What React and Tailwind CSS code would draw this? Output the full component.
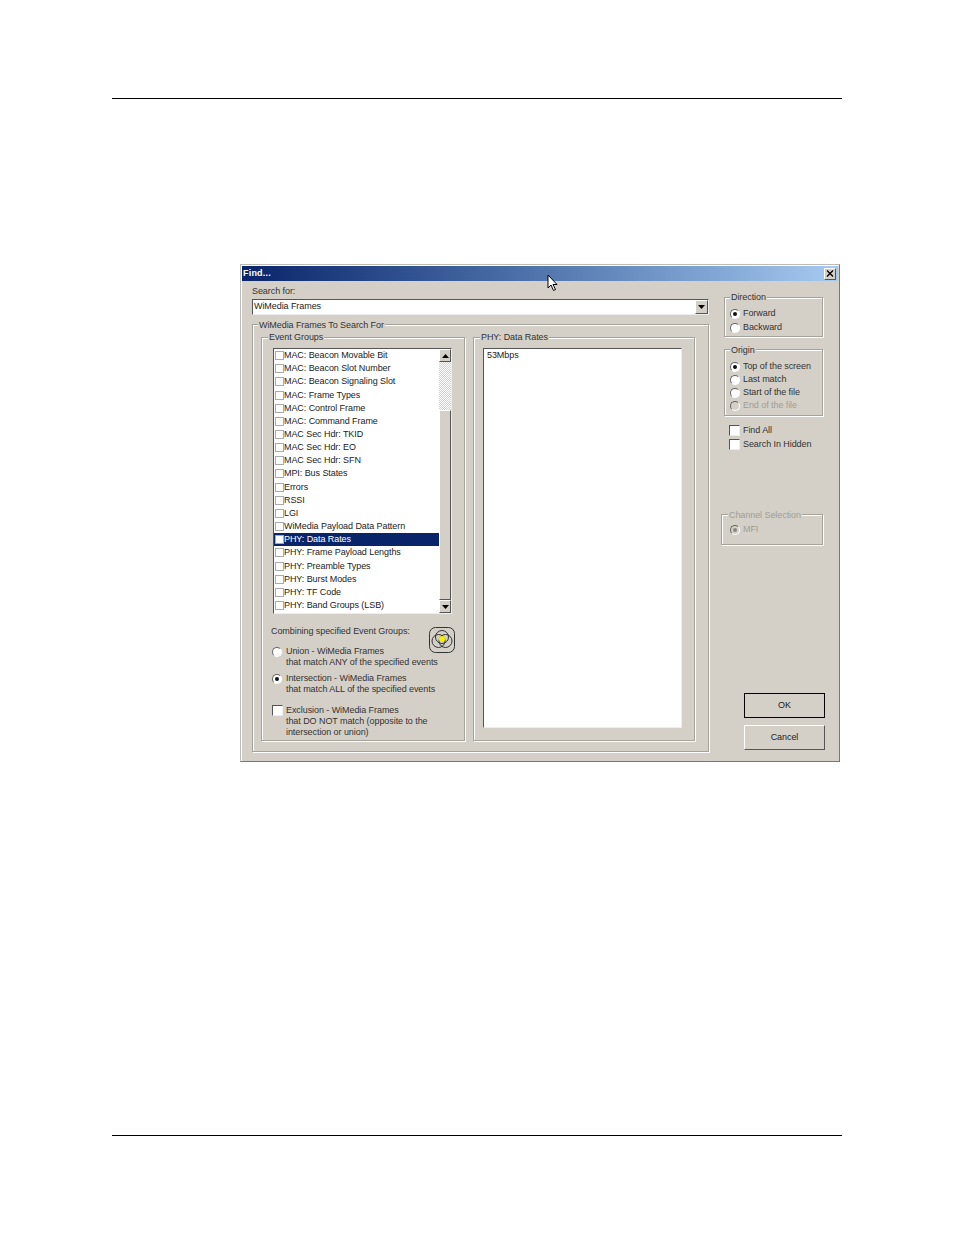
const font = { fontFamily: '"Liberation Sans", Arial, sans-serif' }

const events = ['MAC: Beacon Movable Bit','MAC: Beacon Slot Number','MAC: Beacon Signaling Slot','MAC: Frame Types','MAC: Control Frame','MAC: Command Frame','MAC Sec Hdr: TKID','MAC Sec Hdr: EO','MAC Sec Hdr: SFN','MPI: Bus States','Errors','RSSI','LGI','WiMedia Payload Data Pattern','PHY: Data Rates','PHY: Frame Payload Lengths','PHY: Preamble Types','PHY: Burst Modes','PHY: TF Code','PHY: Band Groups (LSB)']

const sunken = 'border border-t-[#555] border-l-[#555] border-r-[#eee] border-b-[#eee]'
const raised = 'border border-t-white border-l-white border-r-[#555] border-b-[#555]'

function Group({ label, className = '', labelClass = 'left-[5px] top-[-6px]', disabled, children }){
  return (
    <div className={`relative border border-[#a5a29c] shadow-[inset_1px_1px_0_#fff,1px_1px_0_#fff] ${className}`}>
      <span className={`absolute bg-[#d4d0c8] px-[1px] text-[9px] leading-[12px] ${labelClass} ${disabled ? 'text-[#a09d96]' : 'text-[#333]'}`}>{label}</span>
      {children}
    </div>
  )
}

function Radio({ checked, disabled }){
  return (
    <span className={`relative flex size-[10px] shrink-0 items-center justify-center rounded-full border border-t-[#666] border-l-[#666] border-r-white border-b-white ${disabled ? 'bg-[#d4d0c8]' : 'bg-white'}`}>
      {checked && <span className={`size-[4px] rounded-full ${disabled ? 'bg-[#888]' : 'bg-[#111]'}`}/>}
    </span>
  )
}

function Check(){
  return <span className={`size-[11px] shrink-0 bg-white ${sunken}`}/>
}

function Option({ label, checked, disabled }){
  return (
    <div className={`flex h-[13px] items-center gap-[3px] text-[9px] ${disabled ? 'text-[#a09d96]' : 'text-[#333]'}`}>
      <Radio checked={checked} disabled={disabled}/>
      <span>{label}</span>
    </div>
  )
}

function ScrollArrow({ up }){
  return (
    <div className={`flex h-[13px] items-center justify-center bg-[#d4d0c8] ${raised}`}>
      <svg width="7" height="4" viewBox="0 0 7 4"><path d={up ? 'M3.5 0L7 4H0z' : 'M0 0H7L3.5 4z'} fill="#000"/></svg>
    </div>
  )
}

function Venn(){
  return (
    <svg width="26" height="26" viewBox="0 0 26 26" className="mt-[2px] shrink-0" fill="none" stroke="#333" strokeWidth="1">
      <rect x="0.5" y="0.5" width="25" height="25" rx="6"/>
      <circle cx="13" cy="10" r="6.5"/>
      <circle cx="9.5" cy="14" r="6.5"/>
      <circle cx="16.5" cy="14" r="6.5"/>
      <circle cx="13" cy="12" r="3" fill="#f4f000" stroke="none"/>
    </svg>
  )
}

export default function App(){
  return (
    <div style={font} className="flex h-[1235px] w-[954px] flex-col whitespace-nowrap bg-white tracking-[-0.07px]">
      <div className="mx-[112px] mt-[98px] h-px bg-black"/>

      <div className="relative ml-[240px] mt-[165px] flex h-[498px] w-[600px] flex-col border border-[#bbb] border-r-[#777] border-b-[#777] bg-[#d4d0c8] p-[1px] shadow-[inset_1px_1px_0_#fff]">
        <div className="flex h-[15px] shrink-0 items-center justify-between bg-gradient-to-r from-[#0a246a] to-[#a6caf0] pl-[1px] pr-[2px]">
          <span className="text-[9px] font-bold leading-none tracking-[0.2px] text-white">Find...</span>
          <span className={`flex size-[12px] items-center justify-center bg-[#d4d0c8] ${raised}`}>
            <svg width="8" height="7" viewBox="0 0 8 7" stroke="#000" strokeWidth="1.3"><path d="M1 0.5L7 6.5M7 0.5L1 6.5"/></svg>
          </span>
        </div>

        <div className="flex flex-1 pl-[10px]">
          <div className="flex w-[457px] shrink-0 flex-col">
            <div className="mt-[4px] text-[9px] leading-[12px] text-[#333]">Search for:</div>
            <div className={`mt-[2px] flex h-[16px] items-center justify-between bg-white pl-[1px] ${sunken}`}>
              <span className="text-[9px] text-[#222]">WiMedia Frames</span>
              <div className={`flex h-[14px] w-[13px] items-center justify-center bg-[#d4d0c8] ${raised}`}>
                <svg width="7" height="4" viewBox="0 0 7 4"><path d="M0 0H7L3.5 4z" fill="#000"/></svg>
              </div>
            </div>

            <Group label="WiMedia Frames To Search For" className="mt-[9px] flex h-[428px] gap-[8px] pl-[8px] pt-[12px]">
              <Group label="Event Groups" labelClass="left-[6px] top-[-7px]" className="flex h-[404px] w-[204px] shrink-0 flex-col pl-[11px]">
                <div className={`mt-[10px] flex h-[266px] w-[179px] bg-white ${sunken}`}>
                  <div className="flex-1 overflow-hidden text-[9px] text-[#222]">
                    {events.map(name => (
                      <div key={name} className={`flex h-[13.16px] items-center pl-[1px] leading-none ${name === 'PHY: Data Rates' ? 'bg-[#0a246a] text-white' : ''}`}>
                        <span className={`size-[9px] shrink-0 border border-[#aaa] ${name === 'PHY: Data Rates' ? 'bg-white' : ''}`}/>
                        {name}
                      </div>
                    ))}
                  </div>
                  <div className="flex w-[12px] shrink-0 flex-col">
                    <ScrollArrow up/>
                    <div className="h-[48px] bg-[repeating-conic-gradient(#fff_0_25%,#d4d0c8_0_50%)] bg-[length:2px_2px]"/>
                    <div className={`flex-1 bg-[#d4d0c8] ${raised}`}/>
                    <ScrollArrow/>
                  </div>
                </div>

                <div className="mt-[11px] flex h-[12px] items-start justify-between pr-[9px] text-[9px] leading-[12px] text-[#333]">
                  <span className="-ml-[2px]">Combining specified Event Groups:</span>
                  <Venn/>
                </div>
                <div className="mt-[9px] flex flex-col text-[9px] leading-[11px] text-[#333]">
                  <div className="-ml-[1px] flex gap-[4px]">
                    <div className="mt-[1px]"><Radio/></div>
                    <div>Union - WiMedia Frames<br/>that match ANY of the specified events</div>
                  </div>
                  <div className="-ml-[1px] mt-[5px] flex gap-[4px]">
                    <div className="mt-[1px]"><Radio checked/></div>
                    <div>Intersection - WiMedia Frames<br/>that match ALL of the specified events</div>
                  </div>
                  <div className="-ml-[1px] mt-[10px] flex gap-[3px]">
                    <Check/>
                    <div>Exclusion - WiMedia Frames<br/>that DO NOT match (opposite to the<br/>intersection or union)</div>
                  </div>
                </div>
              </Group>

              <Group label="PHY: Data Rates" labelClass="left-[6px] top-[-7px]" className="h-[404px] w-[222px] shrink-0 pl-[9px]">
                <div className={`mt-[10px] h-[380px] w-[199px] bg-white pl-[3px] text-[9px] leading-[12px] text-[#222] ${sunken}`}>53Mbps</div>
              </Group>
            </Group>
          </div>

          <div className="ml-[15px] flex w-[100px] flex-col">
            <Group label="Direction" labelClass="left-[5px] top-[-7px]" className="mt-[16px] flex h-[40px] w-[99px] flex-col pl-[5px] pt-[9px]">
              <Option label="Forward" checked/>
              <div className="mt-[1px]"><Option label="Backward"/></div>
            </Group>
            <Group label="Origin" className="mt-[12px] flex h-[67px] w-[99px] flex-col pl-[5px] pt-[10px]">
              <Option label="Top of the screen" checked/>
              <Option label="Last match"/>
              <Option label="Start of the file"/>
              <Option label="End of the file" disabled/>
            </Group>
            <div className="mt-[8px] flex flex-col gap-[1px] pl-[5px] text-[9px] text-[#333]">
              <div className="flex h-[13px] items-center gap-[3px]"><Check/>Find All</div>
              <div className="flex h-[13px] items-center gap-[3px]"><Check/>Search In Hidden</div>
            </div>
            <Group label="Channel Selection" labelClass="left-[6px] top-[-6px]" disabled className="-ml-[3px] mt-[63px] h-[31px] w-[102px] pl-[8px] pt-[8px]">
              <Option label="MFI" checked disabled/>
            </Group>
            <div className="mb-[10px] ml-[20px] mt-auto flex flex-col gap-[7px] text-[9px] text-[#222]">
              <button className="flex h-[25px] w-[81px] items-center justify-center bg-[#d4d0c8] outline outline-1 -outline-offset-1 outline-black">OK</button>
              <button className={`flex h-[25px] w-[81px] items-center justify-center bg-[#d4d0c8] ${raised}`}>Cancel</button>
            </div>
          </div>
        </div>

        <svg width="12" height="18" viewBox="0 0 12 18" className="absolute left-[306px] top-[9px]">
          <path d="M1 1V14L4 11L6.5 16.5L8.5 15.5L6 10.5H10Z" fill="#fff" stroke="#000" strokeWidth="1"/>
        </svg>
      </div>

      <div className="mx-[112px] mt-[373px] h-px bg-black"/>
    </div>
  )
}
